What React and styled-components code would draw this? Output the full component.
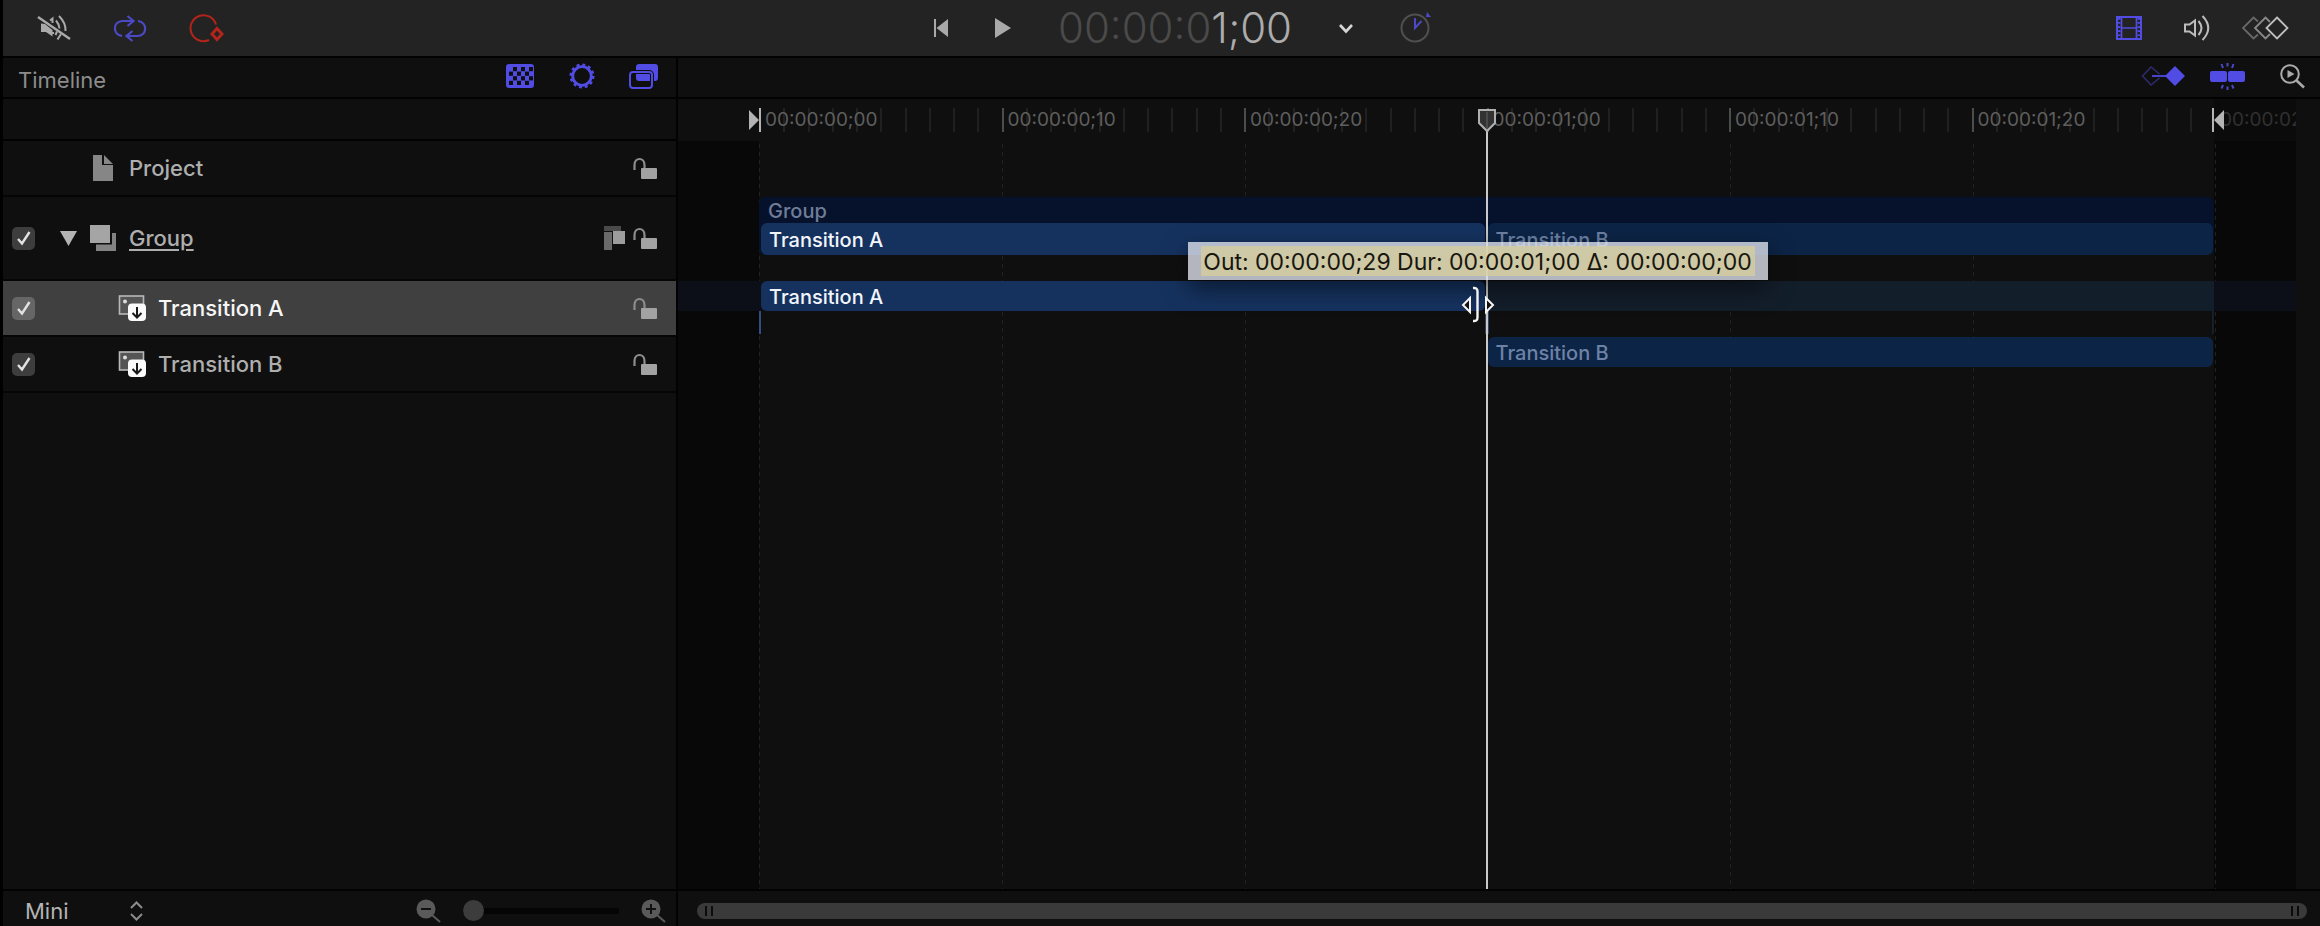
import React from "react";
import styled, { createGlobalStyle, css } from "styled-components";

const color = {
  panel: "#0f0f0f",
  shade: "#080808",
  toolbar: "#232323",
  line: "#020202",
  accent: "#504ce4",
  accentDim: "#4c49c6",
  icon: "#a9a9a9",
  record: "#b3241b",
};

const GlobalStyle = createGlobalStyle`
  *, *::before, *::after { box-sizing: border-box; }
  body {
    margin: 0;
    background: ${color.panel};
    color: #aeaeae;
    font-family: Inter, "Liberation Sans", sans-serif;
    font-size: 22px;
  }
  svg { display: block; overflow: visible; }
`;

const Page = styled.div`
  display: flex;
  flex-direction: column;
  min-height: 100vh;
  border-left: 3px solid #000;
`;

const Toolbar = styled.header`
  display: grid;
  grid-template-columns: 1fr auto 1fr;
  align-items: center;
  height: 58px;
  padding: 0 31px 0 34px;
  background: ${color.toolbar};
  border-bottom: 2px solid ${color.line};
`;

const ToolGroup = styled.div`
  display: flex;
  align-items: center;
  gap: ${(p) => p.$gap}px;
  justify-content: ${(p) => (p.$end ? "flex-end" : "flex-start")};
`;

const Transport = styled(ToolGroup)`
  padding-left: 40px;
`;

const IconButton = styled.button`
  display: grid;
  place-items: center;
  width: ${(p) => p.$w}px;
  height: 30px;
  padding: 0;
  border: 0;
  background: none;
  color: ${(p) => p.$color || color.icon};
  cursor: pointer;
`;

const Timecode = styled.output`
  font-size: 42px;
  line-height: 48px;
  font-weight: 300;
  color: #acacac;
  white-space: nowrap;
`;

const Faint = styled.span`
  color: #4a4a4a;
`;

const Body = styled.main`
  flex: 1;
  display: grid;
  grid-template-columns: minmax(320px, 675px) minmax(0, 1fr);
`;

const Sidebar = styled.aside`
  display: flex;
  flex-direction: column;
  border-right: 2px solid ${color.line};
`;

const PanelHeader = styled.div`
  display: flex;
  align-items: center;
  justify-content: ${(p) => (p.$end ? "flex-end" : "space-between")};
  height: 41px;
  padding: 0 ${(p) => (p.$end ? 5 : 17)}px 4px 15px;
  border-bottom: 2px solid ${color.line};
`;

const PanelTitle = styled.h1`
  margin: 0;
  padding-top: 8px;
  font-size: 22px;
  line-height: 28px;
  font-weight: 400;
  color: #8c8c8c;
`;

const HeaderGap = styled.div`
  height: 42px;
  border-bottom: 2px solid ${color.line};
`;

const LayerList = styled.ul`
  flex: 1;
  margin: 0;
  padding: 0;
  list-style: none;
`;

const LayerRow = styled.li`
  display: flex;
  align-items: center;
  height: ${(p) => (p.$tall ? 84 : 56)}px;
  padding: 0 19px 0 9px;
  border-bottom: 2px solid #050505;
  background: ${(p) => (p.$selected ? "#404040" : "transparent")};
  color: ${(p) => (p.$selected ? "#f6f6f6" : "#aeaeae")};
`;

const CheckSlot = styled.span`
  display: grid;
  width: 23px;
  height: 23px;
`;

const Check = styled.input`
  grid-area: 1 / 1;
  appearance: none;
  width: 23px;
  height: 23px;
  margin: 0;
  border-radius: 5px;
  background: ${(p) => (p.$selected ? "#666" : "#3d3d3d")};
`;

const CheckMark = styled.svg`
  grid-area: 1 / 1;
  place-self: center;
  pointer-events: none;
`;

const Disclosure = styled.button`
  display: grid;
  place-items: center;
  width: 18px;
  height: 20px;
  margin-left: 24px;
  padding: 0;
  border: 0;
  background: none;
`;

const LayerName = styled.label`
  display: flex;
  align-items: center;
  gap: 13px;
  flex: 1;
  margin-left: ${(p) => p.$indent}px;
  font-size: 22px;
  line-height: 28px;
  font-weight: 500;
  text-decoration: ${(p) => (p.$linked ? "underline" : "none")};
  text-underline-offset: 3px;
`;

const LayerIcon = styled.span`
  display: grid;
  place-items: center;
  width: 26px;
  height: 26px;
`;

const LayerActions = styled.div`
  display: flex;
  align-items: center;
  gap: 8px;
`;

const Footer = styled.footer`
  display: flex;
  align-items: center;
  height: 37px;
  padding: ${(p) => (p.$bar ? "4px 13px 0 19px" : "4px 10px 0 22px")};
  border-top: 2px solid ${color.line};
`;

const SizePicker = styled.div`
  display: grid;
  align-items: center;
  width: 118px;
`;

const Select = styled.select`
  grid-area: 1 / 1;
  appearance: none;
  width: 100%;
  padding: 0;
  border: 0;
  background: none;
  color: #b4b4b4;
  font-family: inherit;
  font-size: 22px;
  line-height: 28px;
`;

const SelectArrows = styled.svg`
  grid-area: 1 / 1;
  justify-self: end;
  pointer-events: none;
`;

const ZoomGroup = styled.div`
  display: flex;
  align-items: center;
  gap: 22px;
  margin-left: auto;
`;

const Slider = styled.input`
  appearance: none;
  width: 156px;
  height: 21px;
  margin: 0;
  background: linear-gradient(#050505, #050505) center / 100% 6px no-repeat;
  &::-webkit-slider-thumb {
    appearance: none;
    width: 21px;
    height: 21px;
    border-radius: 50%;
    background: #3c3c3c;
  }
`;

const Timeline = styled.section`
  display: flex;
  flex-direction: column;
  min-width: 0;
`;

const Canvas = styled.div`
  flex: 1;
  display: grid;
  grid-template-columns: 81px minmax(0, 1fr) 82px 24px;
  grid-template-rows: 42px minmax(0, 1fr);
`;

const Shade = styled.div`
  grid-row: 2;
  grid-column: ${(p) => p.$col};
  background: ${color.shade};
`;

const Ruler = styled.div`
  grid-area: 1 / 2;
  display: grid;
  grid-template-columns: repeat(6, 1fr);
`;

const Segment = styled.div`
  display: grid;
  align-items: center;
`;

const Ticks = styled.div`
  grid-area: 1 / 1;
  display: grid;
  grid-template-columns: repeat(10, 1fr);
`;

const Tick = styled.i`
  height: 24px;
  border-left: 2px solid ${(p) => (p.$major ? "#4c4c4c" : "#202020")};
`;

const rulerText = css`
  font-size: 19px;
  line-height: 24px;
  white-space: nowrap;
`;

const RulerLabel = styled.span`
  grid-area: 1 / 1;
  padding-left: 6px;
  color: #5e5e5e;
  ${rulerText}
`;

const RulerTail = styled.div`
  grid-area: 1 / 3;
  display: flex;
  align-items: center;
  padding-left: 6px;
  overflow: hidden;
  background: #0b0b0b;
  color: #303030;
  ${rulerText}
`;

const GuideLines = styled.div`
  grid-area: 2 / 2;
  display: grid;
  grid-template-columns: repeat(6, 1fr);
  margin-right: -2px;
  padding-top: 3px;
`;

const dashes = "repeating-linear-gradient(#202020 0 4px, transparent 4px 8px)";

const Guide = styled.i`
  background: ${dashes} left / 1px 100% no-repeat;
  &:last-child {
    background:
      ${dashes} left / 1px 100% no-repeat,
      ${dashes} right / 1px 100% no-repeat;
  }
`;

const Lanes = styled.div`
  grid-area: 2 / 1 / 3 / 4;
  padding-top: 56px;
`;

const Lane = styled.div`
  display: grid;
  grid-template-columns: 81px minmax(0, 1fr) 82px;
  height: ${(p) => (p.$tall ? 84 : 56)}px;
  align-items: start;
  background: ${(p) =>
    p.$selected ? "linear-gradient(#0c0f18, #0c0f18) top / 100% 30px no-repeat" : "none"};
`;

const LaneRange = styled.div`
  grid-column: 2;
  display: grid;
  grid-template-columns: 1fr 1fr;
  background: ${(p) => (p.$group ? "#06122b" : "none")};
  border-radius: 6px;
`;

const Clip = styled.div`
  grid-column: ${(p) => p.$col};
  height: ${(p) => (p.$deep ? 32 : 30)}px;
  margin: 0 ${(p) => (p.$col === 2 ? 1 : 2)}px;
  padding-left: 8px;
  border-radius: 6px;
  font-size: 20px;
  line-height: ${(p) => (p.$deep ? 34 : 32)}px;
  background: ${(p) => (p.$dim ? "#0c2446" : "#15325f")};
  color: ${(p) => (p.$dim ? "#6d82a6" : "#f2f5fa")};
  font-weight: 500;
`;

const GroupLabel = styled.div`
  grid-column: 1 / 3;
  height: 26px;
  padding-left: 9px;
  font-size: 20px;
  line-height: 28px;
  font-weight: 500;
  color: #6f7d99;
`;

const Remainder = styled.div`
  grid-column: 2;
  height: 30px;
  background: #131e2b;
`;

const BracketRow = styled.div`
  grid-column: 1 / 3;
  height: 23px;
  border-left: 2px solid #2f4f80;
  border-right: 2px solid #16202b;
  background: linear-gradient(#2c4363, #2c4363) center / 4px 100% no-repeat;
`;

const Overlay = styled.div`
  grid-area: 1 / 2 / 3 / 3;
  position: relative;
  pointer-events: none;
`;

const InMarker = styled.svg`
  position: absolute;
  top: 9px;
  right: 100%;
  margin-right: -2px;
`;

const OutMarker = styled.svg`
  position: absolute;
  top: 9px;
  left: 100%;
  margin-left: -2px;
`;

const Playhead = styled.div`
  position: absolute;
  top: 32px;
  bottom: 0;
  left: 50%;
  width: 2px;
  margin-left: -1px;
  background: #c9c9c9;
`;

const PlayheadKnob = styled.svg`
  position: absolute;
  top: 10px;
  left: 50%;
  margin-left: -9px;
`;

const Tooltip = styled.div`
  position: absolute;
  top: 143px;
  left: 50%;
  margin-left: -299px;
  padding: 4px 13px;
  background: rgba(220, 224, 234, 0.8);
  box-shadow: 0 8px 24px rgba(0, 0, 0, 0.5);
`;

const TooltipText = styled.div`
  width: 554px;
  height: 30px;
  background: rgba(216, 206, 154, 0.72);
  color: #17160f;
  font-size: 23px;
  line-height: 32px;
  text-align: center;
  white-space: nowrap;
`;

const TrimCursor = styled.svg`
  position: absolute;
  top: 187px;
  left: 50%;
  margin-left: -26px;
`;

const ScrollBar = styled.div`
  flex: 1;
  display: flex;
  justify-content: space-between;
  align-items: center;
  height: 16px;
  padding: 0 8px;
  border-radius: 8px;
  background: #3a3a3a;
`;

const Grip = styled.i`
  width: 8px;
  height: 10px;
  border: solid #0b0b0b;
  border-width: 0 2px;
`;

const MutedIcon = () => (
  <svg width="34" height="28" viewBox="0 0 34 28" fill="none" stroke="currentColor" strokeWidth="2">
    <path d="M4 9.500L8 10L15.500 16V22.500L9 18H4Z" fill="currentColor" stroke="none" />
    <path d="M13 6.500L15.500 4.500V9M19 6.500Q22 10 22.500 14.500M22 2Q29 9 28.500 17M16 18V20M20 17.500L18.500 21M24 20L20.500 25.500" />
    <path d="M1 3L33 25" strokeWidth="2.400" />
  </svg>
);

const LoopIcon = () => (
  <svg width="32" height="28" viewBox="0 0 32 28" fill="none" stroke="currentColor" strokeWidth="2.200">
    <path d="M8 22C-1.500 20.500 -1.500 8 8 7H19M13.500 2L19.500 7L13.500 12M24 7C33.500 8.500 33.500 21 24 22H13M18.500 17L12.500 22L18.500 27" />
  </svg>
);

const RecordIcon = () => (
  <svg width="35" height="28" viewBox="0 0 35 28" fill="none" stroke="currentColor" strokeWidth="2">
    <path d="M27 10.500A13 13 0 1 0 20 26" />
    <path d="M28 14.500L33 20L28 25.500L23 20Z" strokeWidth="3" />
  </svg>
);

const CheckerIcon = () => (
  <svg width="28" height="24" viewBox="0 0 28 24">
    <rect width="28" height="24" rx="3" fill="currentColor" />
    {[0, 1, 2, 3].map((r) =>
      [0, 1, 2].map((c) => (
        <rect key={`${r}${c}`} x={3 + c * 8 + (r % 2 ? 0 : 4)} y={3 + r * 4.600} width="4" height="4.200" fill="#0f0f0f" />
      ))
    )}
  </svg>
);

const GearIcon = () => (
  <svg width="26" height="26" viewBox="-13 -13 26 26" fill="none" stroke="currentColor">
    <circle r="9.300" strokeWidth="2.800" />
    <circle r="11.200" strokeWidth="2.600" strokeDasharray="2.930 2.930" />
  </svg>
);

const StackIcon = () => (
  <svg width="30" height="26" viewBox="0 0 30 26">
    <rect x="7" y="1" width="22" height="17" rx="3" fill="currentColor" />
    <rect x="1" y="9" width="22" height="16" rx="3" fill="none" stroke="#0f0f0f" strokeWidth="4" />
    <rect x="1" y="9" width="22" height="16" rx="3" fill="none" stroke="currentColor" strokeWidth="2" />
  </svg>
);

const SkipBackIcon = () => (
  <svg width="14" height="18" viewBox="0 0 14 18" fill="currentColor">
    <path d="M0 0H2V18H0ZM14 0V18L2.500 9Z" />
  </svg>
);

const PlayIcon = () => (
  <svg width="16" height="20" viewBox="0 0 16 20" fill="currentColor">
    <path d="M0 0L16 10L0 20Z" />
  </svg>
);

const ChevronIcon = () => (
  <svg width="14" height="10" viewBox="0 0 14 10" fill="none" stroke="#d6d6d6" strokeWidth="2.600">
    <path d="M1 2L7 8.500L13 2" />
  </svg>
);

const DurationIcon = () => (
  <svg width="32" height="30" viewBox="0 0 32 30" fill="none">
    <circle cx="15" cy="15" r="13.500" stroke="#505050" strokeWidth="2" />
    <path d="M15 5V15L21.500 8" stroke={color.accentDim} strokeWidth="2" />
    <path d="M27 -1L31 4H26Z" fill={color.accentDim} />
  </svg>
);

const FilmIcon = () => (
  <svg width="26" height="24" viewBox="0 0 26 24" fill="none" stroke="currentColor">
    <rect x="1" y="1" width="24" height="22" strokeWidth="2" />
    <path d="M5.500 1V23M20.500 1V23M5 12H21" strokeWidth="1.700" />
    <path d="M3 2V23M23 2V23" strokeWidth="3" strokeDasharray="1.700 2.400" />
  </svg>
);

const SpeakerIcon = () => (
  <svg width="26" height="26" viewBox="0 0 26 26" fill="none" stroke="currentColor" strokeWidth="2">
    <path d="M1 9.500H5.500L11 5.500V20.500L5.500 16.500H1Z" />
    <path d="M14.500 6Q20.500 13 14.500 20M18.500 1Q30 13 18.500 25" />
  </svg>
);

const KeyframesIcon = () => (
  <svg width="48" height="24" viewBox="0 0 48 24" fill="none" strokeWidth="1.800">
    <path d="M17 5.500L12.500 1.500L2 12L12.500 22.500L17 18.500" stroke="#686868" />
    <path d="M29 6L24.500 1.500L14 12L24.500 22.500L29 18" stroke="#8a8a8a" />
    <path d="M36 1.500L46.500 12L36 22.500L25.500 12Z" stroke="#c0c0c0" />
  </svg>
);

const KeyPairIcon = () => (
  <svg width="44" height="20" viewBox="0 0 44 20" fill="none">
    <path d="M18.500 8L10 1L1.500 10L10 19L18.500 12" stroke="#2e2c70" strokeWidth="1.500" />
    <path d="M11 10H26" stroke="currentColor" strokeWidth="1.800" />
    <path d="M34 0L44 10L34 20L24 10Z" fill="currentColor" />
  </svg>
);

const SnapIcon = () => (
  <svg width="36" height="28" viewBox="0 0 36 28">
    <rect x="0" y="9" width="17" height="11" rx="2" fill="currentColor" />
    <rect x="18" y="9" width="17" height="11" rx="2" fill="currentColor" />
    <path d="M17.500 1V4.500M11.500 2L13 6M23.500 2L22 6M17.500 24.500V28M13 23L11.500 26.500M22 23L23.500 26.500" stroke={color.accentDim} strokeWidth="2" />
  </svg>
);

const MagnifierIcon = () => (
  <svg width="26" height="24" viewBox="0 0 26 24" fill="none" stroke="currentColor" strokeWidth="2">
    <circle cx="10" cy="10" r="8.800" />
    <path d="M16.500 16.500L24 23.500" strokeWidth="2.600" />
    <path d="M7.500 6V14L14.500 10Z" fill="currentColor" stroke="none" />
  </svg>
);

const ZoomIcon = ({ plus }) => (
  <svg width="25" height="24" viewBox="0 0 25 24">
    <circle cx="10" cy="10" r="9.500" fill="#5a5a5a" />
    <path d="M16 16L24 23" stroke="#5a5a5a" strokeWidth="2" />
    <path d={plus ? "M5 10H15M10 5V15" : "M5 10H15"} stroke="#111" strokeWidth="2" />
  </svg>
);

const LockIcon = () => (
  <svg width="24" height="21" viewBox="0 0 24 21">
    <path d="M1.500 12V7C1.500 -1 11.500 -1 11.500 7V11" fill="none" stroke="#8d8d8d" strokeWidth="2.200" />
    <rect x="8" y="10" width="16" height="11" rx="1" fill="#a2a2a2" />
  </svg>
);

const MaskIcon = () => (
  <svg width="21" height="24" viewBox="0 0 21 24">
    <rect width="17" height="5" fill="#4a4a4a" />
    <rect y="6" width="8" height="18" fill="#6a6a6a" />
    <rect x="9" y="5" width="12" height="13" fill="#9c9c9c" />
  </svg>
);

const DocumentIcon = () => (
  <svg width="20" height="26" viewBox="0 0 20 26" fill="#868686">
    <path d="M0 0H9V10H20V26H0ZM11 0L20 9H11Z" />
  </svg>
);

const GroupIcon = () => (
  <svg width="26" height="26" viewBox="0 0 26 26">
    <path d="M6 19.500H22V8H26V26H6Z" fill="#838383" />
    <rect width="20" height="18" fill="#a5a5a5" />
  </svg>
);

const ClipIcon = () => (
  <svg width="27" height="26" viewBox="0 0 27 26">
    <rect x="0.500" y="1" width="24" height="18" fill="#555" stroke="#b8b8b8" strokeWidth="1.600" />
    <circle cx="6" cy="6.500" r="2" fill="#ddd" />
    <rect x="9" y="8.500" width="18" height="17.500" rx="4" fill="#fafafa" />
    <path d="M18 12V22M13.500 18L18 22.500L22.500 18" fill="none" stroke="#181818" strokeWidth="2" />
  </svg>
);

const layers = [
  { id: "project", name: "Project", icon: <DocumentIcon /> },
  { id: "group", name: "Group", icon: <GroupIcon />, tall: true, check: true, open: true },
  { id: "a", name: "Transition A", icon: <ClipIcon />, check: true, selected: true },
  { id: "b", name: "Transition B", icon: <ClipIcon />, check: true },
];

const indentFor = (layer) => {
  if (!layer.check) return 78;
  return layer.open ? 13 : 84;
};

const labels = ["00:00:00;00", "00:00:00;10", "00:00:00;20", "00:00:01;00", "00:00:01;10", "00:00:01;20"];

function Layer({ layer }) {
  return (
    <LayerRow $tall={layer.tall} $selected={layer.selected}>
      {layer.check && (
        <CheckSlot>
          <Check type="checkbox" id={`layer-${layer.id}`} defaultChecked $selected={layer.selected} />
          <CheckMark width="14" height="14" viewBox="0 0 14 14" fill="none" stroke="#e2e2e2" strokeWidth="2.400">
            <path d="M1 8L5 12.500L12.500 1" />
          </CheckMark>
        </CheckSlot>
      )}
      {layer.open && (
        <Disclosure aria-label="Collapse group">
          <svg width="17" height="15" viewBox="0 0 17 15"><path d="M0 0H17L8.500 15Z" fill="#b4b4b4" /></svg>
        </Disclosure>
      )}
      <LayerName htmlFor={layer.check ? `layer-${layer.id}` : undefined} $indent={indentFor(layer)} $linked={layer.open}>
        <LayerIcon>{layer.icon}</LayerIcon>
        <span>{layer.name}</span>
      </LayerName>
      <LayerActions>
        {layer.open && <IconButton $w={21} aria-label="Isolate group"><MaskIcon /></IconButton>}
        <IconButton $w={24} aria-label={`Lock ${layer.name}`}><LockIcon /></IconButton>
      </LayerActions>
    </LayerRow>
  );
}

export default function App() {
  return (
    <>
      <GlobalStyle />
      <Page>
        <Toolbar>
          <ToolGroup $gap={42}>
            <IconButton $w={34} aria-label="Mute audio"><MutedIcon /></IconButton>
            <IconButton $w={34} $color={color.accentDim} aria-label="Loop playback"><LoopIcon /></IconButton>
            <IconButton $w={35} $color={color.record} aria-label="Record keyframes"><RecordIcon /></IconButton>
          </ToolGroup>
          <Transport $gap={47}>
            <IconButton $w={14} aria-label="Go to start"><SkipBackIcon /></IconButton>
            <IconButton $w={16} aria-label="Play"><PlayIcon /></IconButton>
            <Timecode><Faint>00:00:0</Faint>1;00</Timecode>
            <IconButton $w={14} aria-label="Timecode options"><ChevronIcon /></IconButton>
            <IconButton $w={32} aria-label="Show duration"><DurationIcon /></IconButton>
          </Transport>
          <ToolGroup $gap={20} $end>
            <IconButton $w={48} $color={color.accent} aria-label="Show timeline"><FilmIcon /></IconButton>
            <IconButton $w={48} aria-label="Show audio" $color="#bcbcbc"><SpeakerIcon /></IconButton>
            <IconButton $w={48} aria-label="Show keyframes"><KeyframesIcon /></IconButton>
          </ToolGroup>
        </Toolbar>
        <Body>
          <Sidebar>
            <PanelHeader>
              <PanelTitle>Timeline</PanelTitle>
              <ToolGroup $gap={32}>
                <IconButton $w={30} $color={color.accent} aria-label="Masks"><CheckerIcon /></IconButton>
                <IconButton $w={30} $color={color.accent} aria-label="Behaviors"><GearIcon /></IconButton>
                <IconButton $w={30} $color={color.accent} aria-label="Filters"><StackIcon /></IconButton>
              </ToolGroup>
            </PanelHeader>
            <HeaderGap />
            <LayerList>
              {layers.map((layer) => <Layer key={layer.id} layer={layer} />)}
            </LayerList>
            <Footer>
              <SizePicker>
                <Select aria-label="Track height" defaultValue="Mini">
                  <option>Mini</option>
                  <option>Small</option>
                  <option>Large</option>
                </Select>
                <SelectArrows width="13" height="20" viewBox="0 0 13 20" fill="none" stroke="#8c8c8c" strokeWidth="2">
                  <path d="M1 7L6.500 1.500L12 7M1 13L6.500 18.500L12 13" />
                </SelectArrows>
              </SizePicker>
              <ZoomGroup>
                <IconButton $w={25} aria-label="Zoom out"><ZoomIcon /></IconButton>
                <Slider type="range" min="0" max="100" defaultValue="0" aria-label="Zoom" />
                <IconButton $w={25} aria-label="Zoom in"><ZoomIcon plus /></IconButton>
              </ZoomGroup>
            </Footer>
          </Sidebar>
          <Timeline>
            <PanelHeader $end>
              <ToolGroup $gap={20}>
                <IconButton $w={45} $color={color.accent} aria-label="Show keyframe pairs"><KeyPairIcon /></IconButton>
                <IconButton $w={45} $color={color.accent} aria-label="Snapping"><SnapIcon /></IconButton>
                <IconButton $w={45} aria-label="Zoom to fit"><MagnifierIcon /></IconButton>
              </ToolGroup>
            </PanelHeader>
            <Canvas>
              <Shade $col={1} />
              <Shade $col={3} />
              <Ruler>
                {labels.map((label) => (
                  <Segment key={label}>
                    <Ticks>
                      {Array.from({ length: 10 }, (_, i) => <Tick key={i} $major={i === 0} />)}
                    </Ticks>
                    <RulerLabel>{label}</RulerLabel>
                  </Segment>
                ))}
              </Ruler>
              <RulerTail>00:00:02;00</RulerTail>
              <GuideLines>
                {labels.map((label) => <Guide key={label} />)}
              </GuideLines>
              <Lanes>
                <Lane $tall>
                  <LaneRange $group>
                    <GroupLabel>Group</GroupLabel>
                    <Clip $col={1} $deep>Transition A</Clip>
                    <Clip $col={2} $deep $dim>Transition B</Clip>
                  </LaneRange>
                </Lane>
                <Lane $selected>
                  <LaneRange>
                    <Clip $col={1}>Transition A</Clip>
                    <Remainder />
                    <BracketRow />
                  </LaneRange>
                </Lane>
                <Lane>
                  <LaneRange>
                    <Clip $col={2} $dim>Transition B</Clip>
                  </LaneRange>
                </Lane>
              </Lanes>
              <Overlay>
                <InMarker width="12" height="24" viewBox="0 0 12 24" fill="#b4b4b4">
                  <path d="M0 2L10 12L0 22ZM10 0H12V24H10Z" />
                </InMarker>
                <OutMarker width="12" height="24" viewBox="0 0 12 24" fill="#b4b4b4">
                  <path d="M12 2L2 12L12 22ZM0 0H2V24H0Z" />
                </OutMarker>
                <Playhead />
                <PlayheadKnob width="18" height="23" viewBox="0 0 18 23">
                  <path d="M1 1H17V14L9 22L1 14Z" fill="#333" stroke="#b0b0b0" strokeWidth="2" />
                  <path d="M9 3V20" stroke="#555" strokeWidth="1.500" />
                </PlayheadKnob>
                <Tooltip role="tooltip">
                  <TooltipText>Out: 00:00:00;29 Dur: 00:00:01;00 Δ: 00:00:00;00</TooltipText>
                </Tooltip>
                <TrimCursor width="34" height="38" viewBox="0 0 34 38" fill="none" stroke="#f4f4f4" strokeWidth="2.400">
                  <path d="M12 2Q16.500 1.500 16.500 5.500V31.500Q16.500 35.500 12 35" />
                  <path d="M9 12V26L2 19ZM25 12V26L32 19Z" fill="#111" strokeWidth="2" />
                </TrimCursor>
              </Overlay>
            </Canvas>
            <Footer $bar>
              <ScrollBar role="scrollbar" aria-orientation="horizontal" aria-valuenow={0} aria-controls="root">
                <Grip />
                <Grip />
              </ScrollBar>
            </Footer>
          </Timeline>
        </Body>
      </Page>
    </>
  );
}
